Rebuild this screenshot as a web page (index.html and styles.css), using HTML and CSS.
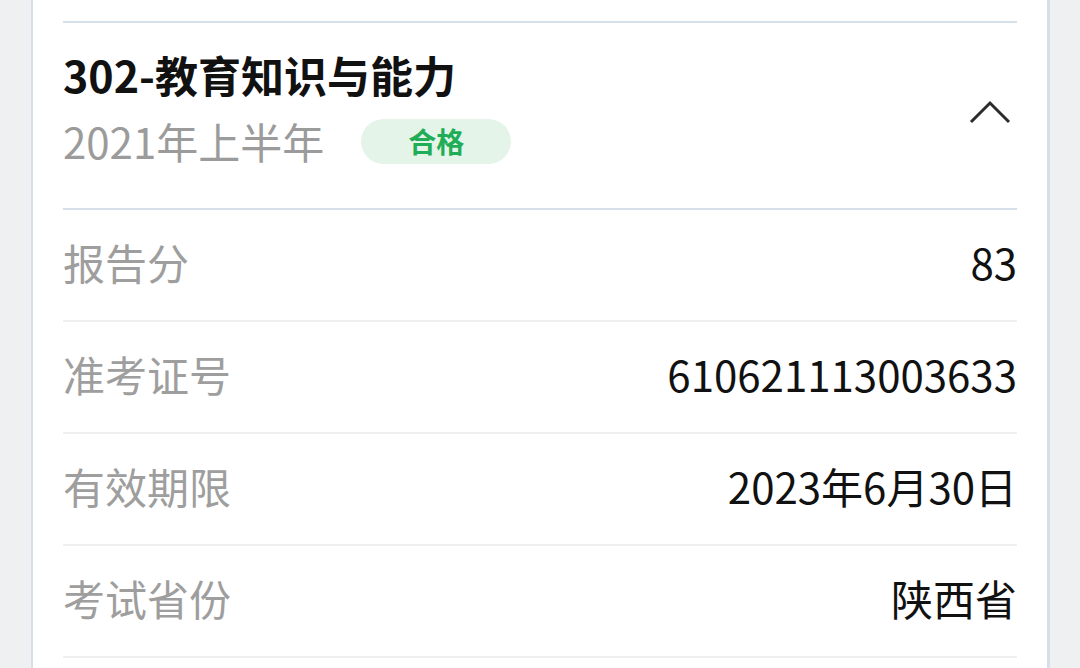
FILE: index.html
```html
<!DOCTYPE html>
<html lang="zh-CN">
<head>
  <meta charset="UTF-8" />
  <meta name="viewport" content="width=device-width, initial-scale=1.0"/>
  <title>成绩查询</title>
  <link rel="stylesheet" href="styles.css">
</head>
<body>
  <div class="score-card">
    <div class="prev-item"></div>

    <div class="exam-header">
      <div class="exam-title-box">
        <div class="exam-title">302-教育知识与能力</div>
        <div class="exam-sub">
          <span class="exam-term">2021年上半年</span>
          <span class="badge-pass">合格</span>
        </div>
      </div>
      <svg class="chevron" width="42" height="24" viewBox="0 0 42 24">
        <polyline points="2,22 21,3 40,22" fill="none" stroke="#2b2b2b" stroke-width="3" />
      </svg>
    </div>

    <div class="info-row">
      <span class="info-label">报告分</span>
      <span class="info-value">83</span>
    </div>
    <div class="info-row">
      <span class="info-label">准考证号</span>
      <span class="info-value">610621113003633</span>
    </div>
    <div class="info-row">
      <span class="info-label">有效期限</span>
      <span class="info-value">2023年6月30日</span>
    </div>
    <div class="info-row">
      <span class="info-label">考试省份</span>
      <span class="info-value">陕西省</span>
    </div>
  </div>
</body>
</html>
```

FILE: styles.css
```css
body {
  font-family: "Noto Sans CJK SC", "Noto Sans", sans-serif;
  background-color: #eef0f2;
  margin: 0;
  padding: 0;
  height: 668px;
  overflow: hidden;
}

.score-card {
  margin: 0 30px 0 31px;
  padding: 0 30px;
  background-color: #ffffff;
  border-left: 2px solid #d4dfe9;
  border-right: 3px solid #d4dfe9;
  min-height: 668px;
}

.prev-item {
  height: 21px;
  border-bottom: 2px solid #d6e0ea;
}

.exam-header {
  display: flex;
  justify-content: space-between;
  box-sizing: border-box;
  height: 187px;
  padding-top: 21px;
  border-bottom: 2px solid #d6e0ea;
}

.exam-title {
  font-size: 43px;
  font-weight: bold;
  color: #111111;
  line-height: 60px;
}

.exam-sub {
  display: flex;
  align-items: center;
  margin-top: 9px;
}

.exam-term {
  font-size: 42px;
  color: #9b9b9b;
  line-height: 56px;
}

.badge-pass {
  margin-left: 37px;
  width: 150px;
  height: 45px;
  border-radius: 23px;
  background-color: #e4f4e8;
  color: #1fad57;
  font-size: 28px;
  font-weight: bold;
  display: flex;
  align-items: center;
  justify-content: center;
}

.chevron {
  align-self: center;
  margin-right: 6px;
  margin-top: -28px;
}

.info-row {
  display: flex;
  align-items: center;
  justify-content: space-between;
  box-sizing: border-box;
  height: 112px;
  padding-bottom: 8px;
  border-bottom: 2px solid #efefef;
  font-size: 42px;
}

.info-label {
  color: #9e9e9e;
}

.info-value {
  color: #111111;
}
```
